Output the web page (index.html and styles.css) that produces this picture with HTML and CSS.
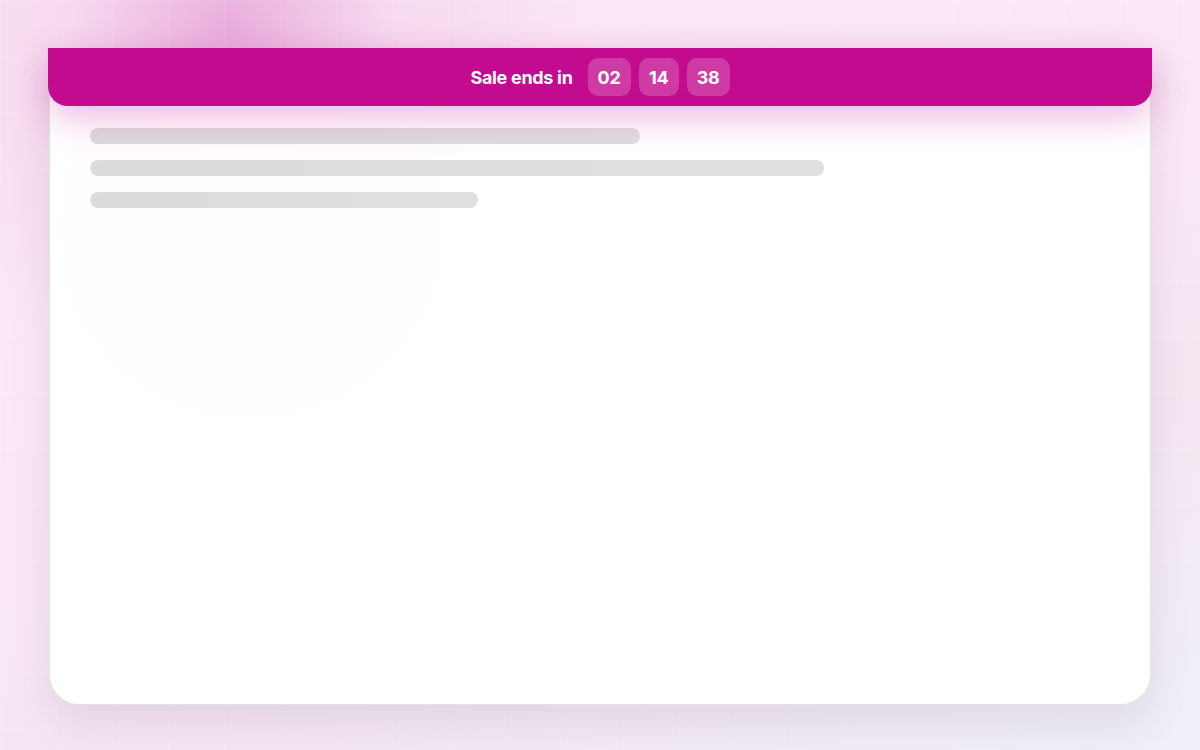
FILE: index.html
```html
<!DOCTYPE html>
<html lang="en">
<head>
    <meta charset="UTF-8">
    <meta name="viewport" content="width=device-width, initial-scale=1.0">
    <title>Sale Countdown</title>
    <link rel="stylesheet" href="styles.css">
</head>
<body>
<div class="stage">
    <div class="shell">
        <!-- Countdown banner sits over the top of the card -->
        <div class="sale-banner">
            <span class="sale-label">Sale ends in</span>
            <div class="timer">
                <span class="timer-box">02</span>
                <span class="timer-box">14</span>
                <span class="timer-box">38</span>
            </div>
        </div>

        <div class="card">
            <div class="skeleton">
                <div class="bar" style="width: 550px"></div>
                <div class="bar" style="width: 734px"></div>
                <div class="bar" style="width: 388px"></div>
            </div>
        </div>
    </div>
</div>
</body>
</html>
```

FILE: styles.css
```css
* {
    box-sizing: border-box;
}

html, body {
    margin: 0;
    height: 100%;
}

body {
    font-family: Inter, "Noto Sans", "Liberation Sans", sans-serif;
    background:
        radial-gradient(circle at 230px 30px, rgba(226, 150, 210, 0.7) 0, rgba(236, 190, 226, 0.3) 160px, rgba(248, 226, 242, 0) 360px),
        linear-gradient(160deg, #fbe4f4 0%, #fbe8f6 35%, #f5e6f2 70%, #eff0f8 100%);
    overflow: hidden;
}

.stage {
    height: 100%;
    padding: 48px 48px 45px;
    background-image:
        linear-gradient(to right, rgba(255, 255, 255, 0.08) 1px, transparent 1px),
        linear-gradient(to bottom, rgba(255, 255, 255, 0.08) 1px, transparent 1px);
    background-size: 56px 56px;
}

.shell {
    position: relative;
    height: 100%;
}

.sale-banner {
    position: absolute;
    top: 0;
    left: 0;
    right: 0;
    z-index: 2;
    height: 58px;
    display: flex;
    align-items: center;
    justify-content: center;
    gap: 15px;
    background: #c30b8f;
    border-radius: 0 0 20px 20px;
    box-shadow: 0 12px 36px rgba(205, 40, 160, 0.32);
    color: #fff;
}

.sale-label {
    font-size: 18px;
    font-weight: 700;
    letter-spacing: -0.3px;
}

.timer {
    display: flex;
    gap: 8px;
}

.timer-box {
    height: 38px;
    min-width: 40px;
    padding: 0 10px;
    display: flex;
    align-items: center;
    justify-content: center;
    border-radius: 10px;
    background: rgba(255, 255, 255, 0.2);
    font-size: 18px;
    font-weight: 700;
    letter-spacing: -0.2px;
}

.card {
    height: 100%;
    margin: 0 1px;
    border: 1px solid #e4e2e6;
    border-top: none;
    border-radius: 0 0 30px 30px;
    background:
        radial-gradient(circle at 200px 180px, rgba(252, 238, 248, 0.22) 0, rgba(252, 242, 249, 0.12) 140px, rgba(255, 255, 255, 0) 230px),
        #fff;
    box-shadow: 0 18px 40px rgba(90, 70, 100, 0.12);
    padding: 80px 40px 0;
}

.skeleton {
    display: flex;
    flex-direction: column;
    gap: 16px;
}

.bar {
    height: 16px;
    border-radius: 8px;
    background: linear-gradient(90deg, #dcdbdd 0%, #dddcde 50%, #e0dfe1 100%);
}
```
